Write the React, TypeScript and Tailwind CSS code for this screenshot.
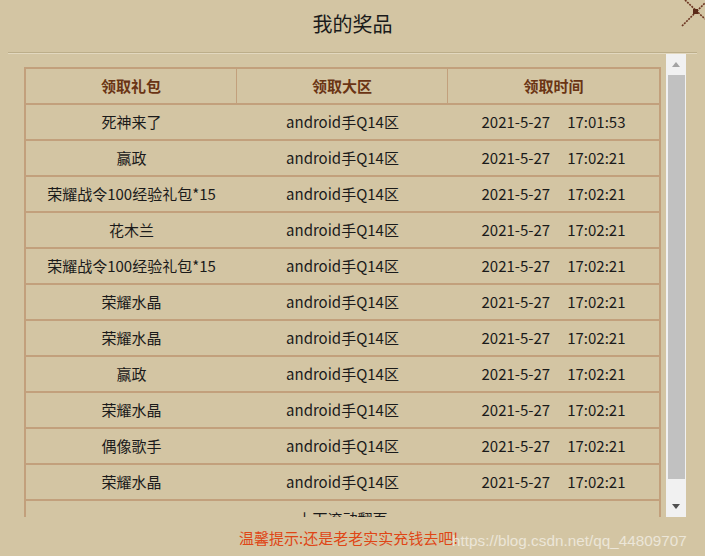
import React from "react";

const rows: [string, string][] = [
  ["死神来了", "17:01:53"],
  ["赢政", "17:02:21"],
  ["荣耀战令100经验礼包*15", "17:02:21"],
  ["花木兰", "17:02:21"],
  ["荣耀战令100经验礼包*15", "17:02:21"],
  ["荣耀水晶", "17:02:21"],
  ["荣耀水晶", "17:02:21"],
  ["赢政", "17:02:21"],
  ["荣耀水晶", "17:02:21"],
  ["偶像歌手", "17:02:21"],
  ["荣耀水晶", "17:02:21"],
];

export default function App() {
  return (
    <div
      className="relative w-[705px] h-[556px] overflow-hidden bg-[#d3c5a3] text-[#1a1a1a]"
      style={{ fontFamily: '"Noto Sans CJK SC", "Noto Sans", sans-serif' }}
    >
      {/* close icon */}
      <svg className="absolute right-0 top-0" width="24" height="28" viewBox="0 0 24 28">
        <g stroke="#6b3420" strokeWidth="1.6" strokeDasharray="2 1">
          <line x1="1" y1="26" x2="24" y2="3" />
          <line x1="4" y1="0" x2="24" y2="19" />
        </g>
        <rect x="12" y="9" width="5" height="5" fill="#5a2a18" />
      </svg>

      <div className="h-[52px] flex items-center justify-center text-[20px] pb-[4px]">我的奖品</div>
      <div className="mx-[8px] h-[2px] border-t border-t-[#bcae8a] border-b border-b-[#e2d8bf]" />

      <div className="flex h-[463px]">
        <div className="pl-[24px] pt-[13px] overflow-hidden">
          <div className="w-[637px] border-l-2 border-t-2 border-r-2 border-[#c2a07c]">
            <div className="grid grid-cols-[211px_211px_211px] h-[36px] border-b-2 border-[#c2a07c] text-[15px] font-bold text-[#6a3414]">
              <div className="flex items-center justify-center border-r border-[#c2a07c]">领取礼包</div>
              <div className="flex items-center justify-center border-r border-[#c2a07c]">领取大区</div>
              <div className="flex items-center justify-center">领取时间</div>
            </div>
            {rows.map(([name, t], i) => (
              <div
                key={i}
                className="grid grid-cols-[211px_211px_211px] h-[36px] border-b-2 border-[#c2a07c] text-[15px]"
              >
                <div className="flex items-center justify-center">{name}</div>
                <div className="flex items-center justify-center">android手Q14区</div>
                <div className="flex items-center justify-center">
                  2021-5-27<span className="ml-[17px]">{t}</span>
                </div>
              </div>
            ))}
            <div className="h-[36px] flex items-center justify-center text-[15px]">上下滚动翻页</div>
          </div>
        </div>
        <div className="ml-[5px] w-[20px] h-[463px] bg-[#f1f1f1] flex flex-col items-center">
          <div className="h-[20px] flex items-center justify-center">
            <svg width="8" height="5" viewBox="0 0 8 5"><path d="M4 0 L8 5 L0 5 Z" fill="#a3a3a3" /></svg>
          </div>
          <div className="w-[17px] h-[404px] bg-[#c1c1c1] mt-[1px]" />
          <div className="flex-1 flex items-end justify-center pb-[8px]">
            <svg width="8" height="5" viewBox="0 0 8 5"><path d="M0 0 L8 0 L4 5 Z" fill="#505050" /></svg>
          </div>
        </div>
      </div>

      <div className="flex justify-center pt-[10px]">
        <span className="text-[15px] text-[#df4616] ml-[-8px]">温馨提示:还是老老实实充钱去吧!</span>
      </div>
      <div
        className="absolute left-[452px] top-[530px] text-[15.3px] text-[#ece6d8]"
        style={{ fontFamily: '"Liberation Sans", Arial, sans-serif' }}
      >
        https://blog.csdn.net/qq_44809707
      </div>
    </div>
  );
}
